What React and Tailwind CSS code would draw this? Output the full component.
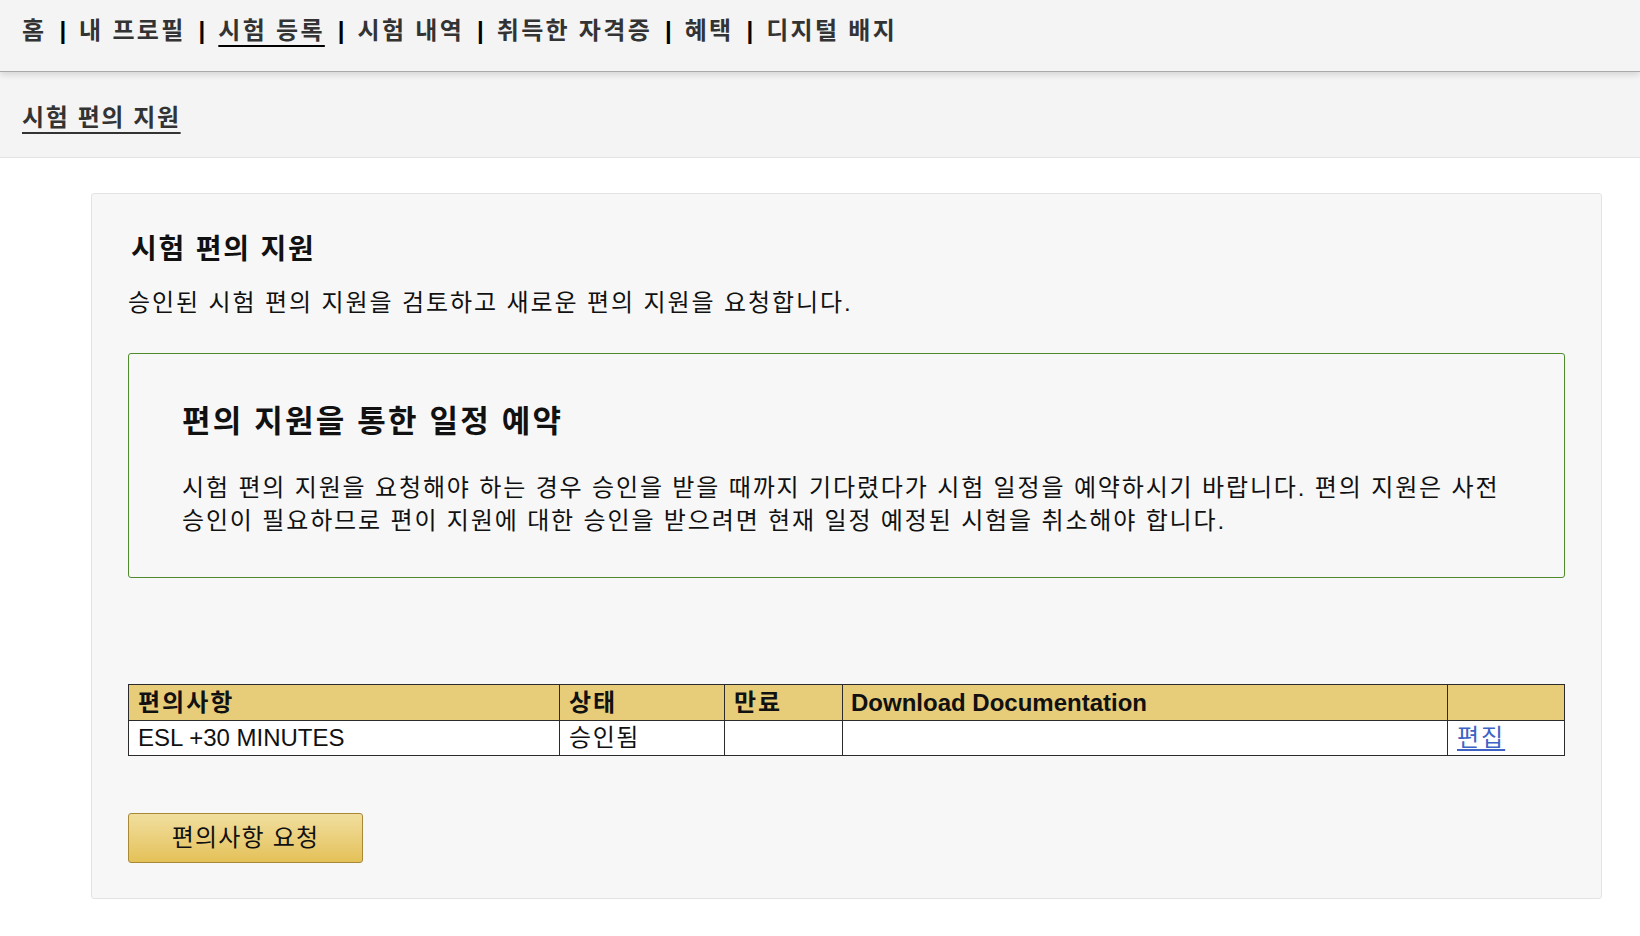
import React from "react";

const navItems = ["홈", "내 프로필", "시험 등록", "시험 내역", "취득한 자격증", "혜택", "디지털 배지"];

export default function App() {
  return (
    <div className="min-h-[936px] bg-white font-['Liberation_Sans','Noto_Sans_CJK_KR',sans-serif] text-[#111]">
      <nav className="relative z-10 flex h-[72px] items-center border-b border-[#a9a9a9] bg-[#f4f4f4] pb-[10px] pl-[22px] shadow-[0_3px_6px_rgba(0,0,0,0.12)]">
        {navItems.map((item, i) => (
          <React.Fragment key={item}>
            {i > 0 && <span className="mx-[13px] text-[24px] font-bold leading-[34px] text-black">|</span>}
            <a
              className={
                "text-[24px] font-bold leading-[34px] tracking-[2.3px] text-[#333] " +
                (item === "시험 등록" ? "underline decoration-black decoration-[2px] underline-offset-[6px]" : "no-underline")
              }
            >
              {item}
            </a>
          </React.Fragment>
        ))}
      </nav>
      <div className="flex h-[86px] items-center border-b border-[#e3e3e3] bg-[#f4f4f4] pl-[22px] pt-[6px]">
        <a className="text-[24px] font-bold leading-[34px] tracking-[1.6px] text-[#333] underline decoration-[#333] decoration-[2px] underline-offset-[6px]">
          시험 편의 지원
        </a>
      </div>
      <main className="pb-[36px] pt-[35px]">
        <section className="ml-[91px] mr-[38px] rounded-[3px] border border-[#e3e3e3] bg-[#f7f7f7] px-[36px] pb-[35px] pt-[39px]">
          <h2 className="pl-[3px] text-[28px] font-bold leading-[34px] tracking-[1.8px] text-[#111]">시험 편의 지원</h2>
          <p className="mt-[19px] text-[24px] leading-[34px] tracking-[1.9px]">승인된 시험 편의 지원을 검토하고 새로운 편의 지원을 요청합니다.</p>
          <div className="mt-[33px] rounded-[3px] border border-[#4f8a2c] pb-[40px] pl-[53px] pr-[40px] pt-[49px]">
            <h3 className="text-[31px] font-bold leading-[38px] tracking-[2.2px] text-[#111]">편의 지원을 통한 일정 예약</h3>
            <p className="mt-[30px] text-[24px] leading-[33px] tracking-[1.85px]">
              시험 편의 지원을 요청해야 하는 경우 승인을 받을 때까지 기다렸다가 시험 일정을 예약하시기 바랍니다. 편의 지원은 사전 승인이 필요하므로 편이 지원에 대한 승인을 받으려면 현재 일정 예정된 시험을 취소해야 합니다.
            </p>
          </div>
          <table className="mt-[106px] w-full table-fixed border-collapse text-left text-[24px]">
            <colgroup>
              <col className="w-[431px]" />
              <col className="w-[165px]" />
              <col className="w-[118px]" />
              <col />
              <col className="w-[117px]" />
            </colgroup>
            <thead>
              <tr className="h-[36px] bg-[#e7cc7a]">
                <th className="border border-[#2b2b2b] px-[9px] py-0 font-bold leading-[30px] tracking-[2px]">편의사항</th>
                <th className="border border-[#2b2b2b] px-[9px] py-0 font-bold leading-[30px] tracking-[2px]">상태</th>
                <th className="border border-[#2b2b2b] px-[9px] py-0 font-bold leading-[30px] tracking-[2px]">만료</th>
                <th className="border border-[#2b2b2b] px-[8px] py-0 font-bold leading-[30px]">Download Documentation</th>
                <th className="border border-[#2b2b2b] px-[9px] py-0 font-bold leading-[30px]"></th>
              </tr>
            </thead>
            <tbody>
              <tr className="h-[35px] bg-white">
                <td className="border border-[#2b2b2b] px-[9px] py-0 leading-[30px]">ESL +30 MINUTES</td>
                <td className="border border-[#2b2b2b] px-[9px] py-0 leading-[30px] tracking-[1.6px]">승인됨</td>
                <td className="border border-[#2b2b2b] px-[9px] py-0 leading-[30px]"></td>
                <td className="border border-[#2b2b2b] px-[9px] py-0 leading-[30px]"></td>
                <td className="border border-[#2b2b2b] px-[9px] py-0 leading-[30px]">
                  <a className="tracking-[2px] text-[#3d63c4] underline decoration-[#3d63c4] underline-offset-[3px]">편집</a>
                </td>
              </tr>
            </tbody>
          </table>
          <button className="mt-[57px] flex h-[50px] w-[235px] items-center justify-center rounded-[3px] border border-[#a88a36] bg-gradient-to-b from-[#f1de9e] to-[#e4c157] text-[24px] leading-[34px] tracking-[1.2px] text-[#111]">
            편의사항 요청
          </button>
        </section>
      </main>
    </div>
  );
}
